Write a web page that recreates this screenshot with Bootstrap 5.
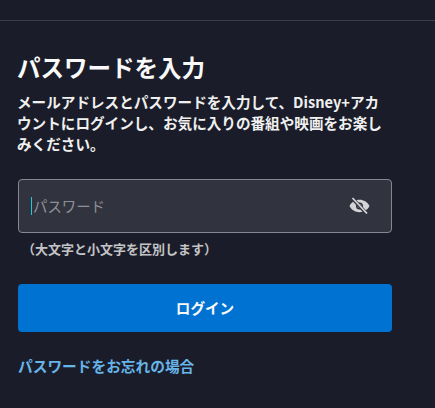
<!DOCTYPE html>
<html lang="ja">
<head>
<meta charset="utf-8">
<title>パスワードを入力</title>
<link href="https://cdn.jsdelivr.net/npm/bootstrap@5.3.0/dist/css/bootstrap.min.css" rel="stylesheet">
<style>
html,body{height:408px;overflow:hidden}
body{background:#1a1d29;font-family:"Noto Sans CJK JP","Noto Sans",sans-serif;color:#f9f9f9}
.top-rule{height:21px;border-bottom:1px solid #3a3c49}
.pane{width:374px;margin-left:18px}
.ttl{font-size:23.5px;font-weight:700;line-height:32px;margin:30px 0 0 -1px;color:#f9f9f9}
.intro{font-size:14.6px;font-weight:700;line-height:21px;margin:8px 0 0 -1px;color:#f0f0f0}
.pw-box{height:54px;margin-top:25px;background:#31343e;border:1px solid #868791;border-radius:4px;padding:0 21px 0 12px}
.caret-bar{width:1px;height:18px;background:#21c8d8;flex:none}
.ph{font-size:14.4px;color:#8f9097;line-height:20px;margin-left:1px}
.hint{font-size:13px;font-weight:700;color:#c4c4c6;line-height:18px;margin:7px 0 0;padding-left:4px}
.go{height:48px;margin-top:26px;background:#0072d2;border:0;border-radius:4px;font-size:14.6px;font-weight:700;color:#f9f9f9}
.go:hover{background:#0072d2;color:#f9f9f9}
.forgot{display:block;margin-top:24px;font-size:14.7px;font-weight:700;line-height:20px;color:#67b4e8;text-decoration:none}
</style>
</head>
<body>
<div class="top-rule"></div>
<main class="pane">
<h1 class="ttl">パスワードを入力</h1>
<p class="intro">メールアドレスとパスワードを入力して、Disney+アカウントにログインし、お気に入りの番組や映画をお楽しみください。</p>
<div class="pw-box d-flex align-items-center justify-content-between">
<div class="d-flex align-items-center"><span class="caret-bar"></span><span class="ph">パスワード</span></div>
<svg width="21" height="20" viewBox="0 0 21 20" aria-label="hide"><path fill="#d4d4d6" fill-rule="evenodd" d="M.5 10C2.6 6 6.200 3.800 10.500 3.800S18.400 6 20.500 10C18.400 14 14.800 16.200 10.500 16.200S2.600 14 .5 10ZM10.500 6.500A3.500 3.500 0 1 0 10.500 13.500A3.500 3.500 0 1 0 10.500 6.500Z"/><circle cx="10.500" cy="10" r="2" fill="#d4d4d6"/><path d="M3.500 2.500L17.500 17.500" stroke="#31343e" stroke-width="3.500"/><path d="M3.500 2L18 17.500" stroke="#d4d4d6" stroke-width="1.800"/></svg>
</div>
<p class="hint">（大文字と小文字を区別します）</p>
<button type="button" class="btn go w-100 d-block">ログイン</button>
<a class="forgot" href="#">パスワードをお忘れの場合</a>
</main>
</body>
</html>
